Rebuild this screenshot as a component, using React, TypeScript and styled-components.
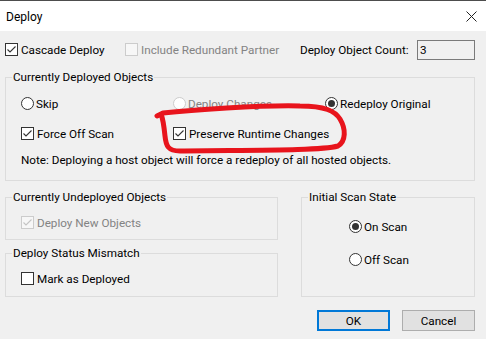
import React from "react";
import styled, { createGlobalStyle } from "styled-components";

const GlobalStyle = createGlobalStyle`
  html, body {
    margin: 0;
    padding: 0;
    background: #f0f0f0;
  }
  body {
    font-family: "Roboto", "Liberation Sans", sans-serif;
    font-size: 11.7px;
    color: #000;
  }
`;

const Window = styled.div`
  position: relative;
  width: 486px;
  height: 339px;
  box-sizing: border-box;
  border-top: 1px solid #4d4d4d;
  background: #f0f0f0;
  overflow: hidden;
`;

const TitleBar = styled.div`
  height: 30px;
  background: #fff;
  display: flex;
  align-items: center;
  justify-content: space-between;
  padding: 0 9px 0 6px;
`;

const Title = styled.span`
  font-size: 12px;
  padding-top: 1px;
`;

const CloseButton = styled.button`
  width: 12px;
  height: 12px;
  padding: 0;
  border: 0;
  background: transparent;
  display: flex;
  align-items: center;
  justify-content: center;
`;

const Body = styled.div`
  padding: 8px 11px 0 5px;
  display: flex;
  flex-direction: column;
`;

const TopRow = styled.div`
  display: grid;
  grid-template-columns: 120px 175px 117px 58px;
  align-items: center;
  height: 20px;
`;

const CountInput = styled.div`
  box-sizing: border-box;
  height: 20px;
  border: 1px solid #7a7a7a;
  background: #f0f0f0;
  padding-left: 2px;
  line-height: 18px;
`;

const Option = styled.label<{ $disabled?: boolean; $gap?: number }>`
  display: flex;
  align-items: center;
  gap: ${(p) => p.$gap ?? 3}px;
  height: 20px;
  white-space: nowrap;
  color: ${(p) => (p.$disabled ? "#838383" : "#000")};
  padding-top: 1px;
`;

const Box = styled.span<{ $disabled?: boolean }>`
  box-sizing: border-box;
  width: 13px;
  height: 13px;
  flex: none;
  border: 1px solid ${(p) => (p.$disabled ? "#cccccc" : "#333333")};
  background: ${(p) => (p.$disabled ? "#f7f7f7" : "#fff")};
  display: flex;
  margin-top: -1px;
`;

const Circle = styled.span<{ $disabled?: boolean }>`
  box-sizing: border-box;
  width: 13px;
  height: 13px;
  flex: none;
  border-radius: 50%;
  border: 1px solid ${(p) => (p.$disabled ? "#cccccc" : "#333333")};
  background: #fff;
  display: flex;
  align-items: center;
  justify-content: center;
  margin-top: -1px;
`;

const Dot = styled.span`
  width: 7px;
  height: 7px;
  border-radius: 50%;
  background: #333;
`;

const Group = styled.fieldset`
  margin: 0;
  padding: 0;
  min-width: 0;
  border: 1px solid #dcdcdc;
`;

const DeployedGroup = styled(Group)`
  margin-top: 10px;
`;

const Legend = styled.legend`
  margin-left: 6px;
  padding: 0 1px;
  line-height: 16px;
`;

const DeployedContent = styled.div`
  padding: 8px 0 10px 15px;
  display: flex;
  flex-direction: column;
`;

const OptionGrid = styled.div`
  display: grid;
  grid-template-columns: 152px 152px auto;
  row-gap: 9px;
`;

const Note = styled.div`
  margin-top: 6px;
  height: 20px;
  line-height: 20px;
`;

const Lower = styled.div`
  margin-top: 8px;
  display: grid;
  grid-template-columns: 273px 174px;
  column-gap: 23px;
`;

const LeftColumn = styled.div`
  display: flex;
  flex-direction: column;
  gap: 5px;
`;

const GroupContent = styled.div<{ $top: number; $bottom: number; $left: number }>`
  padding: ${(p) => `${p.$top}px 0 ${p.$bottom}px ${p.$left}px`};
  display: flex;
  flex-direction: column;
  gap: 12px;
`;

const Footer = styled.div`
  margin-top: 13px;
  display: flex;
  justify-content: flex-end;
  gap: 12px;
`;

const Button = styled.button<{ $default?: boolean }>`
  box-sizing: border-box;
  width: 73px;
  height: 21px;
  padding: 0;
  font: inherit;
  color: #000;
  background: #e1e1e1;
  border: ${(p) => (p.$default ? "2px solid #0078d7" : "1px solid #adadad")};
`;

const Scribble = styled.svg`
  position: absolute;
  left: 0;
  top: 0;
  pointer-events: none;
`;

function CheckBox({ label, checked, disabled }: { label: string; checked?: boolean; disabled?: boolean }) {
  return (
    <Option $disabled={disabled}>
      <Box $disabled={disabled}>
        {checked && (
          <svg width="11" height="11" viewBox="0 0 11 11">
            <path
              d="M1.5 5.5 L4 8 L9.5 2.5"
              fill="none"
              stroke={disabled ? "#c4c4c4" : "#333"}
              strokeWidth="1.1"
            />
          </svg>
        )}
      </Box>
      {label}
    </Option>
  );
}

function Radio({ label, checked, disabled }: { label: string; checked?: boolean; disabled?: boolean }) {
  return (
    <Option $disabled={disabled} $gap={2}>
      <Circle $disabled={disabled}>{checked && <Dot />}</Circle>
      {label}
    </Option>
  );
}

export default function App() {
  return (
    <Window>
      <GlobalStyle />
      <TitleBar>
        <Title>Deploy</Title>
        <CloseButton aria-label="Close">
          <svg width="11" height="11" viewBox="0 0 11 11">
            <path d="M0.5 0.5 L10.5 10.5 M10.5 0.5 L0.5 10.5" stroke="#222" strokeWidth="1" />
          </svg>
        </CloseButton>
      </TitleBar>

      <Body>
        <TopRow>
          <CheckBox label="Cascade Deploy" checked />
          <CheckBox label="Include Redundant Partner" disabled />
          <span>Deploy Object Count:</span>
          <CountInput>3</CountInput>
        </TopRow>

        <DeployedGroup>
          <Legend>Currently Deployed Objects</Legend>
          <DeployedContent>
            <OptionGrid>
              <Radio label="Skip" />
              <Radio label="Deploy Changes" disabled />
              <Radio label="Redeploy Original" checked />
              <CheckBox label="Force Off Scan" checked />
              <CheckBox label="Preserve Runtime Changes" checked />
            </OptionGrid>
            <Note>Note: Deploying a host object will force a redeploy of all hosted objects.</Note>
          </DeployedContent>
        </DeployedGroup>

        <Lower>
          <LeftColumn>
            <Group>
              <Legend>Currently Undeployed Objects</Legend>
              <GroupContent $top={7} $bottom={6} $left={15}>
                <CheckBox label="Deploy New Objects" checked disabled />
              </GroupContent>
            </Group>
            <Group>
              <Legend>Deploy Status Mismatch</Legend>
              <GroupContent $top={7} $bottom={7} $left={15}>
                <CheckBox label="Mark as Deployed" />
              </GroupContent>
            </Group>
          </LeftColumn>
          <Group>
            <Legend>Initial Scan State</Legend>
            <GroupContent $top={11} $bottom={0} $left={47}>
              <Radio label="On Scan" checked />
              <Radio label="Off Scan" />
            </GroupContent>
          </Group>
        </Lower>

        <Footer>
          <Button $default>OK</Button>
          <Button>Cancel</Button>
        </Footer>
      </Body>

      <Scribble width="486" height="339" viewBox="0 0 486 339">
        <path
          d="M157 115 L163 112 C190 109 260 104 300 105 C325 105 335 110 340 118 C346 128 346 140 338 145 C320 150 250 149 180 150 C168 150 166 145 165 135 C164 125 163 118 161 113"
          fill="none"
          stroke="#e8141c"
          strokeWidth="5"
          strokeLinecap="round"
          strokeLinejoin="round"
        />
      </Scribble>
    </Window>
  );
}
